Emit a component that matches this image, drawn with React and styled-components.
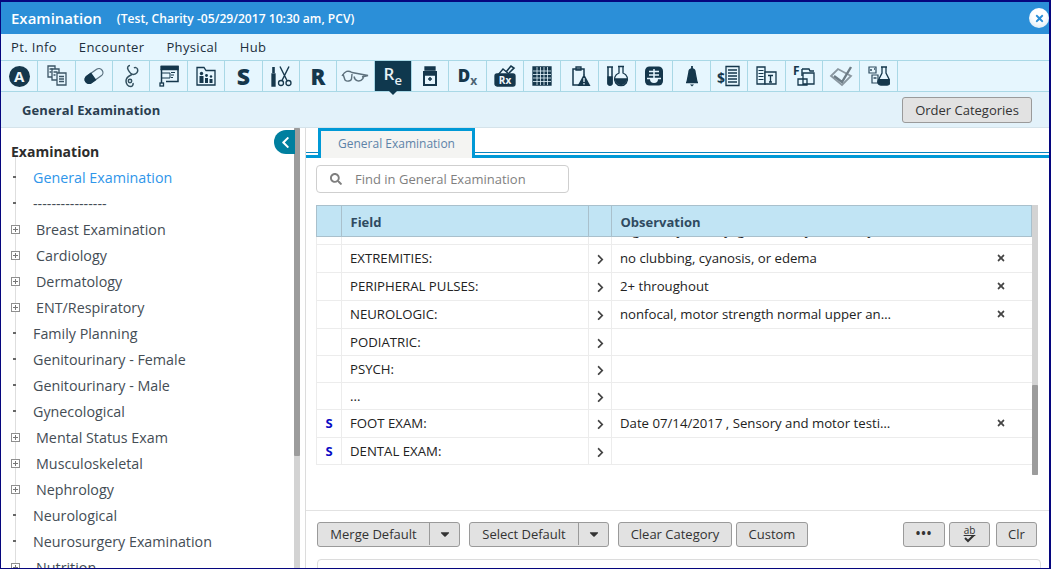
import React from "react";
import styled, { createGlobalStyle } from "styled-components";
import { FaSearch, FaChevronLeft, FaCaretDown, FaChevronRight, FaTimes } from "react-icons/fa";

const ink = "#15374c";

const GlobalStyle = createGlobalStyle`
  html, body { margin: 0; padding: 0; background: #fff; }
  body { font-family: "Open Sans", "Liberation Sans", sans-serif; overflow: hidden; }
  * { box-sizing: border-box; }
`;

const Shell = styled.div`
  width: 1051px;
  height: 569px;
  overflow: hidden;
  display: flex;
  flex-direction: column;
  background: #fff;
  border-style: solid;
  border-color: #06067e;
  border-width: 2px 2px 1px 1px;
`;

const TitleBar = styled.header`
  height: 32px;
  flex: none;
  display: flex;
  align-items: center;
  background: #2b8fd8;
  color: #fff;
  padding-left: 10px;
`;
const Title = styled.h1`
  margin: 0 15px 0 0;
  font-size: 15px;
  font-weight: 600;
`;
const Subtitle = styled.span`
  font-size: 12.1px;
  font-weight: 600;
  flex: 1;
`;
const CloseBtn = styled.button`
  width: 20px;
  height: 20px;
  padding: 0;
  border: 0;
  border-radius: 50%;
  display: flex;
  align-items: center;
  justify-content: center;
  color: #2b8fd8;
  background: radial-gradient(circle at 50% 35%, #fff 40%, #cfe3f2 100%);
`;

const MenuBar = styled.nav`
  height: 26px;
  flex: none;
  display: flex;
  align-items: center;
  gap: 22px;
  padding-left: 10px;
  background: #e6f6fe;
  font-size: 13px;
  color: #1c2e3c;
  letter-spacing: 0.35px;
`;

const Toolbar = styled.div`
  height: 32px;
  flex: none;
  display: grid;
  grid-template-columns: repeat(24, 37.36px);
  background: #e6f6fe;
  border-top: 1px solid #a9d8e6;
  border-bottom: 1px solid #a9d8e6;
`;
const ToolCell = styled.div`
  position: relative;
  display: flex;
  align-items: center;
  justify-content: center;
  border-right: 1px solid #a9d8e6;
  background: ${(p) => (p.$active ? "#0f384e" : "transparent")};
  color: ${(p) => (p.$active ? "#e8f1f5" : ink)};
  ${(p) =>
    p.$active &&
    `&::after {
      content: "";
      position: absolute;
      left: 50%;
      bottom: -4px;
      margin-left: -4px;
      border-left: 4px solid transparent;
      border-right: 4px solid transparent;
      border-top: 4px solid #0f384e;
    }`}
`;
const ToolLetter = styled.span`
  font-size: ${(p) => p.$size || 20}px;
  font-weight: 800;
  line-height: 1;
`;
const SmallLetter = styled.span`
  font-size: ${(p) => p.$size || 13}px;
  font-weight: ${(p) => p.$weight || 700};
  line-height: 1;
  color: ${(p) => p.$color || "inherit"};
  position: relative;
  top: ${(p) => p.$top ?? 3}px;
`;
const Circled = styled.span`
  width: 21px;
  height: 21px;
  border-radius: 50%;
  background: ${ink};
  color: #eef6fa;
  font-size: 15px;
  font-weight: 700;
  display: flex;
  align-items: center;
  justify-content: center;
`;

const Icon = ({ children }) => (
  <svg width="24" height="24" viewBox="0 0 24 24" fill="none" stroke={ink} strokeWidth="1.3">
    {children}
  </svg>
);

const icons = [
  <Circled>A</Circled>,
  <Icon>
    <g stroke="#3c5566">
      <path d="M3 2h7v11H3z" fill="#e6f6fe" />
      <path d="M7 5h7v11H7z" fill="#e6f6fe" />
      <path d="M12 9h9v12h-9z" fill="#e6f6fe" />
      <path d="M4.500 5h3M4.500 8h2M8.500 8h4M8.500 11h2M14 12.500h5M14 15h5M14 17.500h5" />
    </g>
  </Icon>,
  <Icon>
    <g transform="rotate(-35 12 12)">
      <rect x="2" y="8" width="20" height="8" rx="4" stroke="#5b7180" />
      <path d="M11 8H6a4 4 0 0 0 0 8h5z" fill={ink} />
    </g>
  </Icon>,
  <Icon>
    <g stroke="#33505f" strokeWidth="1.500">
      <path d="M11 1.500c-2 0-3 2-2 4 1.500 3 3 5 5.500 5 3 0 5-3 4-5.500-.7-1.500-2.500-1.800-3.500-1" />
      <path d="M13 10.500c-2 1-6 2.500-6 6.500 0 3 2 5.500 4.500 5.500 2 0 3-2 2.500-3.500" />
      <circle cx="11" cy="17" r="1.700" />
    </g>
  </Icon>,
  <Icon>
    <path d="M4 2.500h17v15H9" strokeWidth="1.500" />
    <path d="M4 2.500h17v3H4z" fill={ink} />
    <path d="M4.500 5v14" strokeWidth="1.500" />
    <rect x="3" y="19" width="3.500" height="3" />
    <path d="M5 9h8v5H5M14 8.500h4M14 11h3M14 13.500h2" strokeWidth="1" />
  </Icon>,
  <Icon>
    <path d="M3 21V3.500h7l2 3h9V21z" />
    <g fill={ink} stroke="none">
      <circle cx="7.500" cy="9.500" r="1.700" /><path d="M5.500 12h4v7h-4z" />
      <circle cx="12.500" cy="11.500" r="1.400" /><path d="M11 14h3v5h-3z" />
      <circle cx="17" cy="12.500" r="1.200" /><path d="M15.500 15h3v4h-3z" />
    </g>
  </Icon>,
  <ToolLetter $size={23}>S</ToolLetter>,
  <Icon>
    <path d="M3 10h3v12H3z" fill={ink} />
    <path d="M4.500 3v6" strokeWidth="2.600" />
    <path d="M11 2.500l7 14M20 2.500l-7 14" strokeWidth="1.400" />
    <circle cx="12" cy="19" r="2.500" />
    <circle cx="19.500" cy="19" r="2.500" />
  </Icon>,
  <ToolLetter $size={22}>R</ToolLetter>,
  <svg width="28" height="24" viewBox="0 0 28 24" fill="none" stroke="#5e717d" strokeWidth="1.400">
    <path d="M1 12c3-5 6-6 10-3.500l16 3-6 1.500" />
    <path d="M2 10l2 6c2 2 6 1 6.500-1l.5-5M13 12.500c1 5 6 6 9 2l.5-3" />
  </svg>,
  <span>
    <SmallLetter $size={17} $weight={600} $top={-2}>R</SmallLetter>
    <SmallLetter $size={13} $weight={600}>e</SmallLetter>
  </span>,
  <Icon>
    <path d="M7 3h10v3H7z" fill={ink} />
    <path d="M6 8h12v13H6z" strokeWidth="2" />
    <path d="M7 8h10v3H7z" fill={ink} />
    <path d="M10 15h4M12 13v4" strokeWidth="1.500" />
  </Icon>,
  <span>
    <ToolLetter $size={17}>D</ToolLetter>
    <SmallLetter $size={12} $color="#4c6474">x</SmallLetter>
  </span>,
  <Icon>
    <path d="M13 8l5-6 3 2-5 5" strokeWidth="1.600" />
    <path d="M5 11l5-6 6 5" strokeWidth="1.400" />
    <rect x="2" y="10" width="20" height="12" rx="2" fill={ink} />
    <text x="12" y="20" fontSize="10" fontWeight="700" textAnchor="middle" fill="#eef6fa" stroke="none" fontFamily="Open Sans">Rx</text>
  </Icon>,
  <Icon>
    <path d="M3 3h18v18H3z" fill={ink} />
    <path d="M3 7h18M3 10.500h18M3 14h18M3 17.500h18M7 3v18M10.500 3v18M14 3v18M17.500 3v18" stroke="#e6f6fe" strokeWidth="0.800" />
  </Icon>,
  <Icon>
    <path d="M11 21H5V5h11v6" strokeWidth="1.500" />
    <path d="M8 3h5v3H8z" />
    <path d="M16 10l6.500 12h-13z" fill={ink} stroke="none" />
    <path d="M16 14v4M16 19v1.500" stroke="#e6f6fe" strokeWidth="1.300" />
  </Icon>,
  <Icon>
    <path d="M2 3h6M3 3v16a2 2 0 0 0 4 0V3" strokeWidth="1.500" />
    <path d="M3 13h4v6a2 2 0 0 1-4 0z" fill={ink} />
    <path d="M13 2.500h6M14 2.500V9a6.500 6.500 0 1 0 4 0V2.500" strokeWidth="1.300" />
    <path d="M10.500 15h11a5.500 5.500 0 0 1-11 0z" fill={ink} />
  </Icon>,
  <Icon>
    <rect x="3" y="2.500" width="18" height="19" rx="4.500" fill={ink} stroke="none" />
    <path d="M12 5v12M7 7.500h10M7 11h10M5 14.500h14" stroke="#e6f6fe" strokeWidth="1.500" />
    <path d="M8 15h8a4 4 0 0 1-8 0z" fill="#e6f6fe" stroke="none" />
  </Icon>,
  <Icon>
    <path d="M12 2v3" strokeWidth="1.800" />
    <path d="M9 8c0-4 6-4 6 0l2 10H7z" fill={ink} />
    <path d="M6 18.500h12" strokeWidth="1.500" />
    <path d="M10 20.500h4l-2 2z" fill={ink} stroke="none" />
  </Icon>,
  <Icon>
    <text x="0" y="19" fontSize="14" fontWeight="700" fill={ink} stroke="none" fontFamily="Open Sans">$</text>
    <path d="M9 2.500h13v19H9z" />
    <path d="M11 6h9M11 9h9M11 12h9M11 15h9M11 18h9" strokeWidth="1.300" />
  </Icon>,
  <Icon>
    <path d="M3 3h8v17H3z" />
    <path d="M4.500 6.500h5M4.500 9.500h5M4.500 12.500h5M4.500 15.500h5" strokeWidth="1" />
    <path d="M11 8h11v12H11z" fill="#e6f6fe" />
    <path d="M14 11.500h5M16.500 11.500V18M15 18h3" strokeWidth="1.300" />
  </Icon>,
  <Icon>
    <text x="1" y="11" fontSize="12" fontWeight="700" fill={ink} stroke="none" fontFamily="Open Sans">F</text>
    <path d="M10 5v7M10 5h7l1 2h4" strokeWidth="1.400" />
    <path d="M11 9h11v11H11zM6 15h9v6H6z" fill="#e6f6fe" />
  </Icon>,
  <Icon>
    <path d="M2 12l7-7 13 7-9 9z" stroke="#8a97a0" strokeWidth="1.800" />
    <path d="M5 12l8 6 9-15" stroke="#6d7c86" strokeWidth="2.400" />
  </Icon>,
  <Icon>
    <g stroke="#2c4a5e">
      <path d="M3 3h7v6H3zM6 11h6v8H6z" strokeWidth="1.200" />
      <path d="M4 6h2M8 5h1M7.500 14h3" strokeWidth="1.500" />
    </g>
    <path d="M15 3h6M16 3v6l-4 8a3 3 0 0 0 3 4h6a3 3 0 0 0 3-4l-4-8V3" strokeWidth="1.300" />
    <path d="M13 15h10l1 3a3 3 0 0 1-3 3h-6a3 3 0 0 1-3-3z" fill={ink} stroke="none" />
  </Icon>,
];

const SubBar = styled.div`
  height: 36px;
  flex: none;
  display: flex;
  align-items: center;
  justify-content: space-between;
  padding: 0 17px 0 21px;
  background: #e3f2fa;
  border-bottom: 1px solid #d5e3ea;
`;
const SubTitle = styled.div`
  font-size: 13px;
  font-weight: 700;
  letter-spacing: 0.1px;
  color: #2a3e50;
`;
const Btn = styled.button`
  height: ${(p) => p.$h || 25}px;
  width: ${(p) => (p.$w ? `${p.$w}px` : "auto")};
  padding: 0 0 ${(p) => (p.$h ? 0 : 1)}px;
  border: 1px solid #9a9a9a;
  border-radius: 3px;
  background: #e2e2e2;
  color: #333;
  font-family: inherit;
  font-size: 13px;
  display: inline-flex;
  align-items: center;
  justify-content: center;
`;

const Main = styled.div`
  flex: 1;
  min-height: 0;
  display: flex;
`;
const Side = styled.aside`
  position: relative;
  width: 305px;
  flex: none;
  display: flex;
  padding-right: 5px;
  border-right: 1px solid #dcdcdc;
`;
const Tree = styled.div`
  flex: 1;
  padding-top: 11px;
  overflow: hidden;
`;
const TreeTitle = styled.h2`
  margin: 0 0 0 10px;
  height: 26px;
  line-height: 26px;
  font-size: 14px;
  font-weight: 700;
  color: #2d2d2d;
`;
const TreeList = styled.ul`
  list-style: none;
  margin: -9px 0 0 14px;
  padding: 8px 0 0;
  border-left: 1px solid #dedede;
`;
const TreeItem = styled.li`
  height: 26px;
  display: flex;
  align-items: center;
  margin-left: -5px;
  font-size: 14.3px;
  color: ${(p) => (p.$selected ? "#2f96ea" : "#444d55")};
`;
const Marker = styled.span`
  width: ${(p) => (p.$plus ? 9 : 3)}px;
  height: ${(p) => (p.$plus ? 9 : 2)}px;
  margin-left: ${(p) => (p.$plus ? 0 : 2)}px;
  margin-right: ${(p) => (p.$plus ? 16 : 17)}px;
  flex: none;
  position: relative;
  background: ${(p) => (p.$plus ? "#fff" : "#666")};
  border: ${(p) => (p.$plus ? "1px solid #8f8f8f" : "0")};
  ${(p) =>
    p.$plus &&
    `&::before { content: ""; position: absolute; left: 1px; right: 1px; top: 3px; height: 1px; background: #777; }
     &::after { content: ""; position: absolute; top: 1px; bottom: 1px; left: 3px; width: 1px; background: #777; }`}
`;
const Track = styled.div`
  width: 6px;
  flex: none;
  background: #d3d3d3;
`;
const Thumb = styled.div`
  background: #9c9c9c;
  border-radius: 1px;
  margin-top: ${(p) => p.$top || 0}px;
`;
const Collapse = styled.button`
  position: absolute;
  top: 2px;
  right: 10px;
  width: 21px;
  height: 24px;
  padding: 0 0 0 2px;
  border: 0;
  border-radius: 12px 0 0 12px;
  background: #007f9f;
  color: #fff;
  display: flex;
  align-items: center;
  justify-content: center;
`;

const Content = styled.section`
  flex: 1;
  min-width: 0;
  overflow: hidden;
  display: flex;
  flex-direction: column;
`;
const TabStrip = styled.div`
  height: 30px;
  flex: none;
  padding-left: 12px;
  display: flex;
  border-bottom: 3px solid #0099d6;
  box-shadow: inset 0 -2px 0 #fff, inset 0 -3px 0 #0a86c0;
`;
const Tab = styled.div`
  width: 157px;
  height: 30px;
  display: flex;
  align-items: center;
  justify-content: center;
  padding-bottom: 2px;
  background: #f4f4f2;
  border: 3px solid #0099d6;
  border-bottom: 0;
  font-size: 12px;
  color: #5d83a8;
`;
const Search = styled.div`
  width: 253px;
  height: 28px;
  flex: none;
  margin: 7px 0 0 10px;
  padding-left: 13px;
  display: flex;
  align-items: center;
  gap: 13px;
  border: 1px solid #cfcfcf;
  border-radius: 4px;
  color: #7f7f7f;
  font-size: 13px;
`;
const TableWrap = styled.div`
  height: 270px;
  flex: none;
  margin: 12px 0 0 10px;
  display: flex;
  width: 722px;
`;
const Table = styled.div`
  width: 716px;
  overflow: hidden;
`;
const cols = "24px 247px 23px 420px";
const HeadRow = styled.div`
  display: grid;
  grid-template-columns: ${cols};
  height: 32px;
  background: #c1e4f4;
  border: 1px solid #a9c0cc;
`;
const HeadCell = styled.div`
  display: flex;
  align-items: center;
  padding: 1px 0 0 8.5px;
  border-left: ${(p) => (p.$first ? "0" : "1px solid #a9c0cc")};
  font-size: 13px;
  font-weight: 700;
  color: #2f4a60;
`;
const Row = styled.div`
  display: grid;
  grid-template-columns: ${cols};
  height: ${(p) => p.$h}px;
  overflow: hidden;
  border-left: 1px solid #ececec;
  border-bottom: 1px solid #ececec;
`;
const Cell = styled.div`
  display: flex;
  align-items: center;
  border-left: ${(p) => (p.$first ? "0" : "1px solid #ececec")};
  padding-left: ${(p) => p.$pad || 0}px;
  padding-bottom: 1px;
  font-size: 13.2px;
  color: #222;
  min-width: 0;
`;
const Mark = styled.b`
  width: 100%;
  text-align: center;
  color: #0a0ac4;
  font-size: 13px;
`;
const Go = styled.span`
  width: 100%;
  display: flex;
  justify-content: center;
  color: #444;
  padding-top: 3px;
`;
const ObsText = styled.span`
  width: 272px;
  white-space: nowrap;
  overflow: hidden;
  text-overflow: ellipsis;
  flex: none;
`;
const Remove = styled.span`
  margin-left: 104px;
  margin-top: -1px;
  color: #444;
  display: flex;
`;
const Clipped = styled.div`
  margin-top: -21px;
  padding-left: 8px;
  font-size: 13px;
  color: #222;
  white-space: nowrap;
`;
const Footer = styled.div`
  margin-top: 35px;
  flex: none;
  display: flex;
  flex-direction: column;
  border-top: 1px solid #e2e2e2;
  padding: 11px 0 0 11px;
`;
const ButtonRow = styled.div`
  display: flex;
  align-items: center;
`;
const SplitLabel = styled.span`
  height: 100%;
  display: flex;
  align-items: center;
  justify-content: center;
  width: ${(p) => p.$w}px;
  border-right: 1px solid #9a9a9a;
`;
const SplitCaret = styled.span`
  flex: 1;
  display: flex;
  justify-content: center;
`;
const Gap = styled.span`
  width: ${(p) => p.$w}px;
  flex: none;
`;
const Dots = styled.b`
  letter-spacing: 1px;
  font-size: 12px;
  margin-top: -2px;
`;
const Spell = styled.span`
  display: flex;
  flex-direction: column;
  align-items: center;
  font-size: 10px;
  line-height: 9px;
  text-decoration: underline;
`;
const Notes = styled.div`
  height: 30px;
  width: 724px;
  flex: none;
  margin-top: 12px;
  border: 1px solid #dcdcdc;
  border-radius: 4px;
`;

const tree = [
  ["General Examination", 0, true],
  ["----------------", 0],
  ["Breast Examination", 1],
  ["Cardiology", 1],
  ["Dermatology", 1],
  ["ENT/Respiratory", 1],
  ["Family Planning", 0],
  ["Genitourinary - Female", 0],
  ["Genitourinary - Male", 0],
  ["Gynecological", 0],
  ["Mental Status Exam", 1],
  ["Musculoskeletal", 1],
  ["Nephrology", 1],
  ["Neurological", 0],
  ["Neurosurgery Examination", 0],
  ["Nutrition", 1],
];

const rows = [
  { h: 28, field: "EXTREMITIES:", obs: "no clubbing, cyanosis, or edema" },
  { h: 28, field: "PERIPHERAL PULSES:", obs: "2+ throughout" },
  { h: 28, field: "NEUROLOGIC:", obs: "nonfocal, motor strength normal upper and lower extremities" },
  { h: 27, field: "PODIATRIC:" },
  { h: 27, field: "PSYCH:" },
  { h: 27, field: "..." },
  { h: 28, s: true, field: "FOOT EXAM:", obs: "Date 07/14/2017 , Sensory and motor testing normal bilaterally" },
  { h: 27, s: true, field: "DENTAL EXAM:" },
];

export default function App() {
  return (
    <Shell>
      <GlobalStyle />
      <TitleBar>
        <Title>Examination</Title>
        <Subtitle>(Test, Charity -05/29/2017 10:30 am, PCV)</Subtitle>
        <CloseBtn><FaTimes size={11} /></CloseBtn>
      </TitleBar>
      <MenuBar>
        <span>Pt. Info</span>
        <span>Encounter</span>
        <span>Physical</span>
        <span>Hub</span>
      </MenuBar>
      <Toolbar>
        {icons.map((icon, i) => (
          <ToolCell key={i} $active={i === 10}>{icon}</ToolCell>
        ))}
      </Toolbar>
      <SubBar>
        <SubTitle>General Examination</SubTitle>
        <Btn $w={130} $h={26}>Order Categories</Btn>
      </SubBar>
      <Main>
        <Side>
          <Tree>
            <TreeTitle>Examination</TreeTitle>
            <TreeList>
              {tree.map(([label, plus, selected]) => (
                <TreeItem key={label} $selected={selected}>
                  <Marker $plus={plus} />
                  {label}
                </TreeItem>
              ))}
            </TreeList>
          </Tree>
          <Track><Thumb style={{ height: 328 }} /></Track>
          <Collapse><FaChevronLeft size={13} /></Collapse>
        </Side>
        <Content>
          <TabStrip><Tab>General Examination</Tab></TabStrip>
          <Search>
            <FaSearch size={12} />
            Find in General Examination
          </Search>
          <TableWrap>
            <Table>
              <HeadRow>
                <HeadCell $first />
                <HeadCell>Field</HeadCell>
                <HeadCell />
                <HeadCell>Observation</HeadCell>
              </HeadRow>
              <Row $h={8}>
                <Cell $first />
                <Cell />
                <Cell />
                <Cell><Clipped>regular, symmetry, gait and any deformity</Clipped></Cell>
              </Row>
              {rows.map((r) => (
                <Row key={r.field} $h={r.h}>
                  <Cell $first>{r.s && <Mark>S</Mark>}</Cell>
                  <Cell $pad={8}>{r.field}</Cell>
                  <Cell><Go><FaChevronRight size={11} /></Go></Cell>
                  <Cell $pad={8}>
                    {r.obs && (
                      <>
                        <ObsText>{r.obs}</ObsText>
                        <Remove><FaTimes size={10} /></Remove>
                      </>
                    )}
                  </Cell>
                </Row>
              ))}
            </Table>
            <Track><Thumb $top={180} style={{ height: 90 }} /></Track>
          </TableWrap>
          <Footer>
            <ButtonRow>
              <Btn $w={143}>
                <SplitLabel $w={112}>Merge Default</SplitLabel>
                <SplitCaret><FaCaretDown size={14} /></SplitCaret>
              </Btn>
              <Gap $w={9} />
              <Btn $w={140}>
                <SplitLabel $w={109}>Select Default</SplitLabel>
                <SplitCaret><FaCaretDown size={14} /></SplitCaret>
              </Btn>
              <Gap $w={9} />
              <Btn $w={114}>Clear Category</Btn>
              <Gap $w={4} />
              <Btn $w={72}>Custom</Btn>
              <Gap $w={95} />
              <Btn $w={42}><Dots>•••</Dots></Btn>
              <Gap $w={4} />
              <Btn $w={41}>
                <Spell>
                  ab
                  <svg width="11" height="8" viewBox="0 0 11 8" fill="none" stroke="#333" strokeWidth="2">
                    <path d="M1 3l3 3 6-6" />
                  </svg>
                </Spell>
              </Btn>
              <Gap $w={6} />
              <Btn $w={41}>Clr</Btn>
            </ButtonRow>
            <Notes />
          </Footer>
        </Content>
      </Main>
    </Shell>
  );
}
